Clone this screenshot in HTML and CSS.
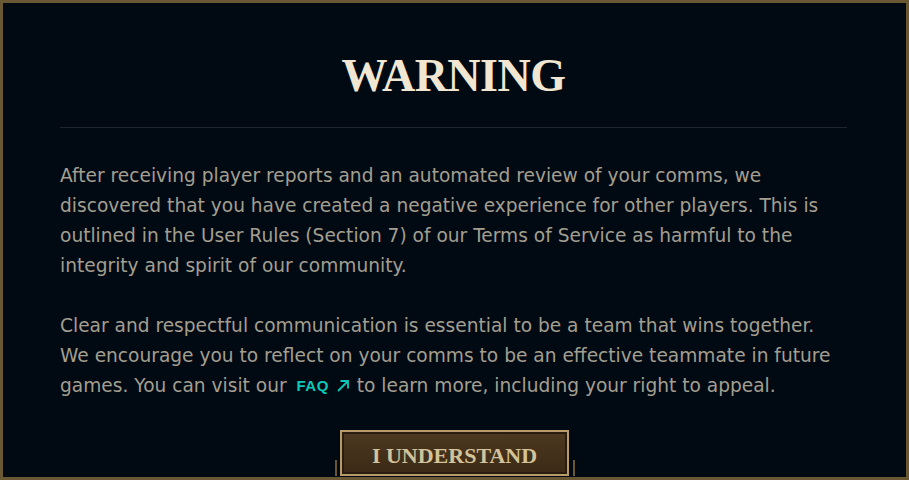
FILE: index.html
```html
<!DOCTYPE html>
<html lang="en">
<head>
<meta charset="utf-8">
<title>Warning</title>
<link rel="stylesheet" href="styles.css">
</head>
<body>
<div class="frame">
  <h1 class="title">WARNING</h1>
  <div class="divider"></div>
  <div class="body">
    <p>After receiving player reports and an automated review of your comms, we<br>discovered that you have created a negative experience for other players. This is<br>outlined in the User Rules (Section 7) of our Terms of Service as harmful to the<br>integrity and spirit of our community.</p>
    <p>Clear and respectful communication is essential to be a team that wins together.<br>We encourage you to reflect on your comms to be an effective teammate in future<br>games. You can visit our <a class="faq" href="#"><span>FAQ</span><svg class="arrow" viewBox="0 0 14 14" width="14" height="14"><path d="M2 12 L12 2 M4.5 2 H12 V9.5" fill="none" stroke="currentColor" stroke-width="1.8"/></svg></a> to learn more, including your right to appeal.</p>
  </div>
  <div class="btn-wrap">
    <button class="btn">I UNDERSTAND</button>
  </div>
</div>
</body>
</html>
```
FILE: styles.css
```css
* { box-sizing: border-box; }
html, body { margin: 0; padding: 0; background: #010a13; }
.frame {
  width: 909px;
  height: 480px;
  border: 3px solid #6a5835;
  background: #010a13;
  padding: 0 59px 0 57px;
  display: flex;
  flex-direction: column;
  overflow: hidden;
  position: relative;
}
.title {
  margin: 50px 0 0;
  font-family: "Liberation Serif", "Times New Roman", serif;
  font-weight: bold;
  font-size: 46px;
  line-height: 46px;
  letter-spacing: -0.5px;
  color: #f0e6d2;
  text-align: center;
}
.divider {
  margin-top: 28px;
  height: 1px;
  background: #1e2429;
}
.body {
  margin-top: 33px;
  font-family: "DejaVu Sans", Verdana, sans-serif;
  font-size: 18.6px;
  line-height: 30px;
  color: #a39e8f;
  white-space: nowrap;
}
.body p { margin: 0 0 30px; }
.body p:last-child { margin-bottom: 0; }
.faq {
  color: #0ac8b9;
  text-decoration: none;
  font-family: "Liberation Sans", Arial, sans-serif;
  font-size: 15px;
  font-weight: bold;
  letter-spacing: 0.5px;
  display: inline-flex;
  align-items: center;
  gap: 7px;
  line-height: 16px;
  vertical-align: 1px;
  margin: 0 1px 0 4px;
}
.arrow { display: block; }
.btn-wrap {
  margin-top: 29px;
  display: flex;
  justify-content: center;
  position: relative;
}
.btn-wrap::before, .btn-wrap::after {
  content: "";
  position: absolute;
  bottom: 0;
  width: 2px;
  height: 16px;
  background: #6a5835;
}
.btn-wrap::before { left: 275px; }
.btn-wrap::after { right: 272px; }
.btn {
  width: 229px;
  height: 46px;
  margin-left: 2px;
  border: 2px solid #b99b6a;
  box-shadow: inset 0 0 0 2px #2a1d0f;
  background: linear-gradient(#4d3820, #3b2a16);
  font-family: "Liberation Serif", "Times New Roman", serif;
  font-weight: bold;
  font-size: 22px;
  color: #d3c39b;
  padding: 5px 0 0;
  line-height: 1;
}
```
